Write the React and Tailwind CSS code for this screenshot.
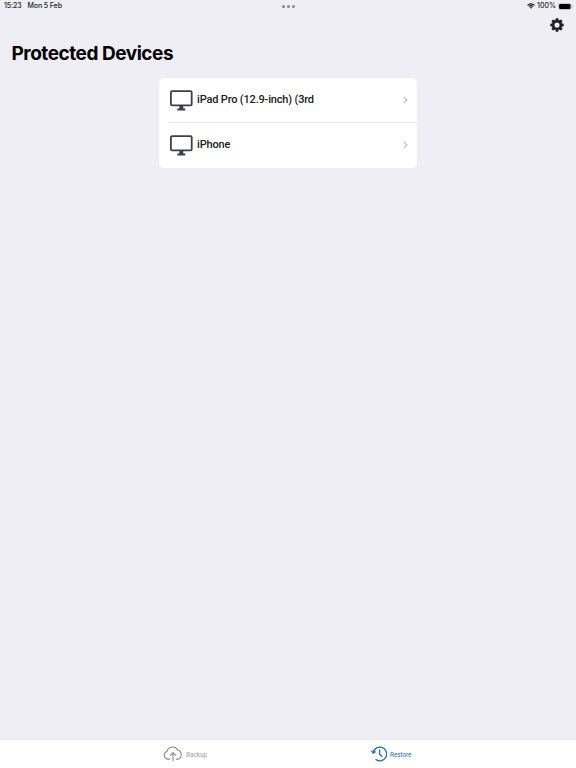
import React from "react";

function StatusBar() {
  return (
    <div className="grid h-3 grid-cols-3 items-center pl-1 pr-[3px] font-['Inter',sans-serif] text-[7px] font-medium leading-3 text-[#1c1c1e]">
      <div className="flex gap-[6px] tracking-[-0.1px]">
        <span>15:23</span>
        <span>Mon 5 Feb</span>
      </div>
      <div className="flex justify-center gap-[2px]">
        <span className="size-[3px] rounded-full bg-[#88888c]" />
        <span className="size-[3px] rounded-full bg-[#88888c]" />
        <span className="size-[3px] rounded-full bg-[#88888c]" />
      </div>
      <div className="flex items-center justify-end gap-[2px]">
        <svg className="h-[6px] w-2" viewBox="0 0 16 12" fill="none" stroke="#111" strokeWidth="2.2">
          <path d="M1 4.6a10 10 0 0 1 14 0M3.7 7.4a6.2 6.2 0 0 1 8.6 0" />
          <path d="M8 11.5 5.6 9.1a3.5 3.5 0 0 1 4.8 0Z" fill="#111" stroke="none" />
        </svg>
        <span>100%</span>
        <svg className="h-[7px] w-[15px]" viewBox="0 0 15 7">
          <rect x=".5" y=".5" width="12.6" height="6" rx="1.8" fill="none" stroke="#a5a5a9" strokeWidth=".6" />
          <rect x="1.1" y="1.1" width="11.4" height="4.8" rx="1.2" fill="#000" />
          <path d="M13.8 2.5q.9.3.9 1t-.9 1Z" fill="#a5a5a9" />
        </svg>
      </div>
    </div>
  );
}

const TEETH = [0, 45, 90, 135, 180, 225, 270, 315];

function Gear() {
  return (
    <svg className="size-[14px]" viewBox="0 0 14 14" fill="#202024">
      <circle cx="7" cy="7" r="3.8" fill="none" stroke="#202024" strokeWidth="2.5" />
      {TEETH.map((a) => (
        <path key={a} d="M5.2 2.8 5.8.3h2.4l.6 2.5Z" transform={`rotate(${a} 7 7)`} />
      ))}
    </svg>
  );
}

function Monitor() {
  return (
    <svg className="h-[21px] w-[23px] shrink-0" viewBox="0 0 23 21" fill="none">
      <rect x=".9" y="1.2" width="20.8" height="14.2" rx="1.1" stroke="#3f3f4c" strokeWidth="1.8" />
      <path d="M9.3 15.5h4v3h2v1.9h-8v-1.9h2Z" fill="#3f3f4c" />
    </svg>
  );
}

function DeviceRow({ name }) {
  return (
    <div className="flex h-11 items-center pl-[11px] pr-[9px]">
      <Monitor />
      <span className="ml-1 flex-1 whitespace-nowrap font-['Roboto',sans-serif] text-[11px] font-medium leading-4 tracking-[-0.17px] text-[#202022]">
        {name}
      </span>
      <svg className="h-2 w-[5px]" viewBox="0 0 5 8" fill="none" stroke="#bdbdc0" strokeWidth="1.2">
        <path d="m.7.9 3.3 3.1L.7 7.1" />
      </svg>
    </div>
  );
}

export default function App() {
  return (
    <div className="flex h-screen w-full flex-col overflow-hidden bg-[#efeef4]">
      <StatusBar />
      <div className="flex h-[26px] items-center justify-end pr-[12px]">
        <Gear />
      </div>
      <h1 className="h-10 pl-[11.5px] font-['Inter',sans-serif] text-[19px] font-bold leading-[31px] tracking-[-0.46px] text-black">
        Protected Devices
      </h1>
      <main className="mx-auto w-[258px] rounded-[5px] bg-white pb-px">
        <DeviceRow name="iPad Pro (12.9-inch) (3rd" />
        <div className="ml-[9px] h-px bg-[#e8e8eb]" />
        <DeviceRow name="iPhone" />
      </main>
      <nav className="mt-auto flex h-7 bg-white font-['Roboto',sans-serif] text-[6.4px]">
        <div className="flex w-1/2 items-center pl-[163px] text-[#a0a0a0]">
          <svg className="h-4 w-5" viewBox="0 0 20 16" fill="none" stroke="#8c8c8c" strokeWidth="1.1" strokeLinecap="round" strokeLinejoin="round">
            <path d="M6.8 13.1H5A4 4 0 0 1 4.1 5.3 5.6 5.6 0 0 1 14.5 4 4.7 4.7 0 0 1 15 13.1H13.2M10 14.8V6.8M7.3 9.4 10 6.7l2.7 2.7" />
          </svg>
          <span className="ml-[3px] mt-[3px]">Backup</span>
        </div>
        <div className="flex w-1/2 items-center pl-[83px] text-[#1f70b1]">
          <svg className="h-4 w-4" viewBox="0 0 16 16" fill="none" stroke="#1f70b1" strokeWidth="1.3" strokeLinecap="round" strokeLinejoin="round">
            <path d="M2.1 6.8A6.8 6.8 0 1 1 5 13.6M8.6 4v4.2l2.4 2.2" />
            <path d="M.4 5.2 2.1 7.6 4.7 6Z" fill="#1f70b1" strokeWidth=".6" />
          </svg>
          <span className="ml-[3px] mt-[3px] tracking-[-0.05px]">Restore</span>
        </div>
      </nav>
    </div>
  );
}
